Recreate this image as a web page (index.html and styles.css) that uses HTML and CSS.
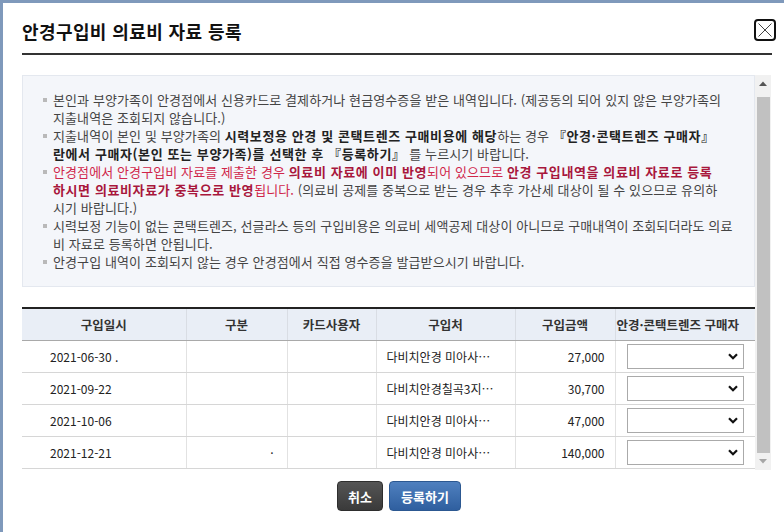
FILE: index.html
```html
<!DOCTYPE html>
<html lang="ko">
<head>
<meta charset="utf-8">
<title>안경구입비 의료비 자료 등록</title>
<link rel="stylesheet" href="styles.css">
</head>
<body>
<div class="dialog">
  <div class="head">
    <h1 class="title">안경구입비 의료비 자료 등록</h1>
    <button class="close" type="button" aria-label="닫기">
      <svg width="18" height="18" viewBox="0 0 18 18"><path d="M2.5 2.5 L15.5 15.5 M15.5 2.5 L2.5 15.5" stroke="#444" stroke-width="1" fill="none"/></svg>
    </button>
  </div>

  <div class="scroll">
    <div class="scroll-content">
      <div class="notice">
        <ul class="notice-list">
          <li>본인과 부양가족이 안경점에서 신용카드로 결제하거나 현금영수증을 받은 내역입니다. (제공동의 되어 있지 않은 부양가족의<br>지출내역은 조회되지 않습니다.)</li>
          <li>지출내역이 본인 및 부양가족의 <b>시력보정용 안경 및 콘택트렌즈 구매비용에 해당</b>하는 경우 <b>『안경·콘택트렌즈 구매자』<br>란에서 구매자(본인 또는 부양가족)를 선택한 후 『등록하기』</b> 를 누르시기 바랍니다.</li>
          <li><span class="red">안경점에서 안경구입비 자료를 제출한 경우 <b>의료비 자료에 이미 반영</b>되어 있으므로 <b>안경 구입내역을 의료비 자료로 등록<br>하시면 의료비자료가 중복으로 반영</b>됩니다.</span> (의료비 공제를 중복으로 받는 경우 추후 가산세 대상이 될 수 있으므로 유의하<br>시기 바랍니다.)</li>
          <li>시력보정 기능이 없는 콘택트렌즈, 선글라스 등의 구입비용은 의료비 세액공제 대상이 아니므로 구매내역이 조회되더라도 의료<br>비 자료로 등록하면 안됩니다.</li>
          <li>안경구입 내역이 조회되지 않는 경우 안경점에서 직접 영수증을 발급받으시기 바랍니다.</li>
        </ul>
      </div>

      <table class="grid">
        <colgroup>
          <col class="c1"><col class="c2"><col class="c3"><col class="c4"><col class="c5"><col class="c6">
        </colgroup>
        <thead>
          <tr>
            <th>구입일시</th>
            <th>구분</th>
            <th>카드사용자</th>
            <th>구입처</th>
            <th>구입금액</th>
            <th class="buyer">안경·콘택트렌즈 구매자</th>
          </tr>
        </thead>
        <tbody>
          <tr>
            <td class="date">2021-06-30 .</td>
            <td></td>
            <td></td>
            <td class="shop">다비치안경 미아사…</td>
            <td class="amt">27,000</td>
            <td class="sel"><select aria-label="구매자"><option></option></select></td>
          </tr>
          <tr>
            <td class="date">2021-09-22</td>
            <td></td>
            <td></td>
            <td class="shop">다비치안경칠곡3지…</td>
            <td class="amt">30,700</td>
            <td class="sel"><select aria-label="구매자"><option></option></select></td>
          </tr>
          <tr>
            <td class="date">2021-10-06</td>
            <td></td>
            <td></td>
            <td class="shop">다비치안경 미아사…</td>
            <td class="amt">47,000</td>
            <td class="sel"><select aria-label="구매자"><option></option></select></td>
          </tr>
          <tr>
            <td class="date">2021-12-21</td>
            <td class="dot">·</td>
            <td></td>
            <td class="shop">다비치안경 미아사…</td>
            <td class="amt">140,000</td>
            <td class="sel"><select aria-label="구매자"><option></option></select></td>
          </tr>
        </tbody>
      </table>
    </div>

    <div class="scrollbar" aria-hidden="true">
      <div class="sb-btn">
        <svg width="8" height="5" viewBox="0 0 8 5"><path d="M0 5 L4 0.5 L8 5 Z" fill="#555"/></svg>
      </div>
      <div class="sb-track"><div class="sb-thumb"></div></div>
      <div class="sb-btn">
        <svg width="8" height="5" viewBox="0 0 8 5"><path d="M0 0 L4 4.5 L8 0 Z" fill="#a6a6a6"/></svg>
      </div>
    </div>
  </div>

  <div class="actions">
    <button class="btn btn-cancel" type="button">취소</button>
    <button class="btn btn-save" type="button">등록하기</button>
  </div>
</div>
</body>
</html>
```

FILE: styles.css
```css
* { box-sizing: border-box; }

html, body {
  margin: 0;
  padding: 0;
  background: #fff;
}

body {
  font-family: "Noto Sans CJK KR", "Noto Sans", sans-serif;
  color: #444;
  font-size: 12px;
}

.dialog {
  height: 532px;
  border-top: 3px solid #7f99bb;
  border-left: 3px solid #7f99bb;
  background: #fff;
  overflow: hidden;
}

.head {
  display: flex;
  align-items: flex-start;
  justify-content: space-between;
  margin: 0 12px 0 19px;
  padding-top: 16px;
  height: 52px;
  border-bottom: 2px solid #333;
}

.title {
  margin: 0;
  font-size: 18px;
  line-height: 24px;
  font-weight: 700;
  color: #111;
  letter-spacing: 0.4px;
}

.close {
  width: 22px;
  height: 22px;
  margin-right: -4px;
  padding: 0;
  border: 2px solid #111;
  border-radius: 4px;
  background: #fff;
  display: flex;
  align-items: center;
  justify-content: center;
}

/* scroll region with a drawn classic scrollbar */
.scroll {
  display: flex;
  margin: 20px 13px 0 19px;
  height: 395px;
  overflow: hidden;
}

.scroll-content {
  width: 733px;
  flex: none;
  overflow: hidden;
}

.scrollbar {
  width: 16px;
  flex: none;
  display: flex;
  flex-direction: column;
  background: #f1f1f1;
}

.sb-btn {
  height: 17px;
  flex: none;
  display: flex;
  align-items: center;
  justify-content: center;
}

.sb-track {
  flex: 1;
  padding: 5px 1px 0 2px;
}

.sb-thumb {
  height: 356px;
  background: #c1c1c1;
}

/* notice box */
.notice {
  height: 212px;
  background: #f4f6fa;
  border: 1px solid #e4e8ef;
}

.notice-list {
  list-style: none;
  margin: 0;
  padding: 15px 0 0 30px;
}

.notice-list li {
  position: relative;
  font-size: 13px;
  line-height: 18px;
  letter-spacing: 0.1px;
  white-space: nowrap;
}

.notice-list li::before {
  content: "";
  position: absolute;
  left: -10px;
  top: 7px;
  width: 4px;
  height: 4px;
  background: #b9b9b9;
}

.notice-list b {
  font-weight: 700;
  color: #222;
  letter-spacing: 0.6px;
}

.red {
  color: #d0264a;
}
.red b {
  color: #a8173c;
}

/* table */
.grid {
  width: 733px;
  margin: 20px 0 0;
  border-collapse: collapse;
  table-layout: fixed;
  border-top: 2px solid #222;
  border-bottom: 1px solid #c8c8c8;
}

.c1 { width: 164px; }
.c2 { width: 101px; }
.c3 { width: 89px; }
.c4 { width: 139px; }
.c5 { width: 100px; }
.c6 { width: 140px; }

.grid th {
  height: 32px;
  background: #e9eef6;
  border-bottom: 1px solid #a9a9a9;
  border-left: 1px solid #d9dde4;
  font-size: 12.5px;
  font-weight: 700;
  color: #333;
  text-align: center;
  padding: 0;
  white-space: nowrap;
}
.grid th:first-child { border-left: none; }
.grid th.buyer {
  text-align: left;
  padding-left: 1px;
  overflow: hidden;
}

.grid td {
  height: 32px;
  border-bottom: 1px solid #d6d6d6;
  border-left: 1px solid #e2e2e2;
  color: #222;
  font-size: 12px;
  padding: 0 10px;
  white-space: nowrap;
  overflow: hidden;
}
.grid td:first-child { border-left: none; }

.grid td.date { padding-left: 28px; }
.grid td.shop { padding-left: 10px; }
.grid td.amt { text-align: right; padding-right: 10px; }
.grid td.dot { text-align: right; padding-right: 13px; }
.grid td.sel { padding: 0 12px 0 11px; }

.grid select {
  appearance: none;
  -webkit-appearance: none;
  display: block;
  width: 117px;
  height: 25px;
  border: 1px solid #aaa;
  border-radius: 0;
  background: #fff url("data:image/svg+xml;utf8,<svg xmlns='http://www.w3.org/2000/svg' width='10' height='7'><path d='M1 1.2 L5 5.2 L9 1.2' stroke='%23111' stroke-width='2.2' fill='none'/></svg>") no-repeat right 5px center;
  font-family: inherit;
  font-size: 12px;
}

/* buttons */
.actions {
  margin: 11px 12px 0 23px;
  display: flex;
  justify-content: center;
  gap: 6px;
}

.btn {
  height: 30px;
  border-radius: 4px;
  font-family: "Noto Sans CJK KR", sans-serif;
  font-size: 13px;
  font-weight: 700;
  color: #fff;
  padding: 0;
  cursor: pointer;
}

.btn-cancel {
  width: 46px;
  background: linear-gradient(#555, #3a3a3a);
  border: 1px solid #2e2e2e;
}

.btn-save {
  width: 72px;
  background: linear-gradient(#4f80bf, #2f5f9f);
  border: 1px solid #2c5891;
}
```
